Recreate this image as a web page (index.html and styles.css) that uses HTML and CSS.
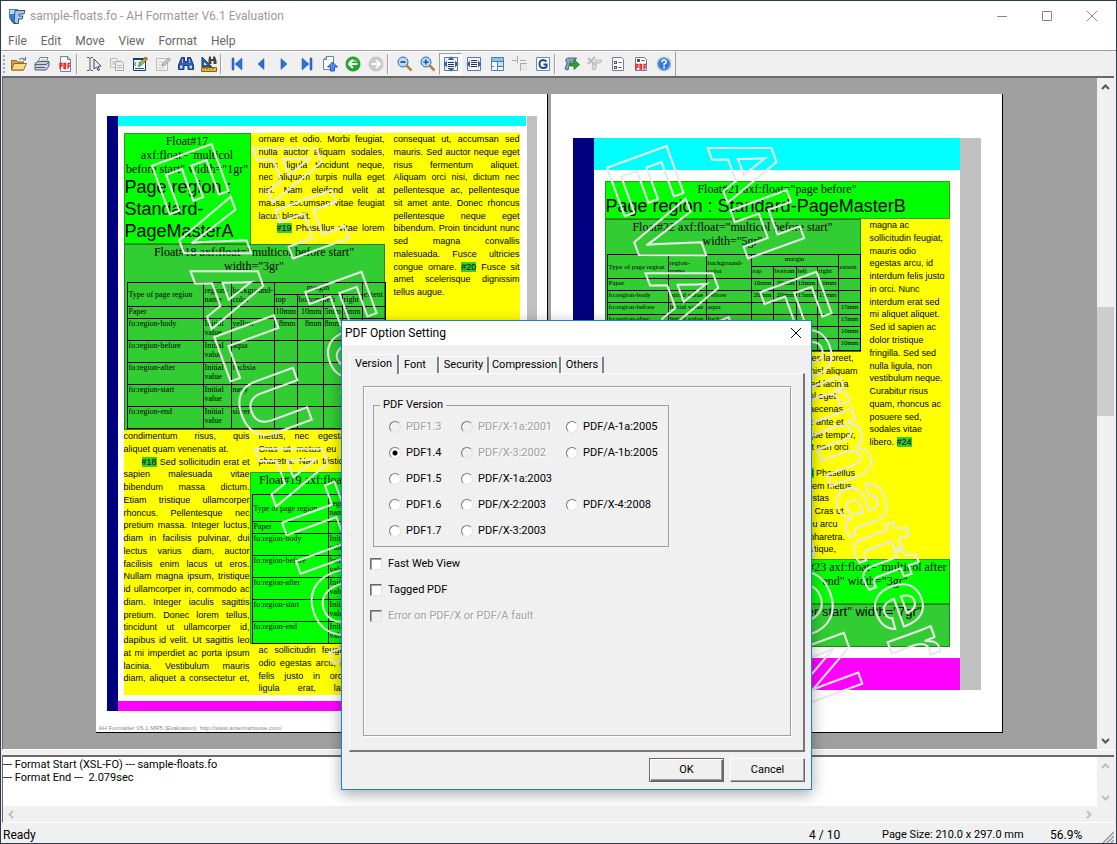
FILE: index.html
```html
<!DOCTYPE html>
<html lang="en">
<head>
<meta charset="utf-8">
<title>sample-floats.fo - AH Formatter V6.1 Evaluation</title>
<link rel="stylesheet" href="styles.css">
</head>
<body>
<div class="window">
  <header class="titlebar">
    <svg class="app-icon" width="18" height="18" viewBox="0 0 18 18"><path d="M1 2h9l-1 13H4L1 11z" fill="#3f7fd0"/><path d="M2 3h6v4H2z" fill="#b9d8f5"/><path d="M7 3.500h10l-1 3.500h-5v2h4l-1 3h-3.500v4.500H6z" fill="#a9c8ea" stroke="#35567f"/><path d="M3 12l2 4h3" fill="none" stroke="#23446f"/></svg>
    <h1 class="title">sample-floats.fo - AH Formatter V6.1 Evaluation</h1>
    <button class="sys" aria-label="Minimize"><svg width="12" height="12"><path d="M1 6.500h10" stroke="#888"/></svg></button>
    <button class="sys" aria-label="Maximize"><svg width="12" height="12"><path d="M1.500 1.500h9v9h-9z" stroke="#888" fill="none"/></svg></button>
    <button class="sys" aria-label="Close"><svg width="12" height="12"><path d="M1 1l10 10M11 1L1 11" stroke="#888"/></svg></button>
  </header>
  <nav class="menu">
    <button>File</button><button>Edit</button><button>Move</button><button>View</button><button>Format</button><button>Help</button>
  </nav>
  <div class="toolbar">
    <span class="grip"></span>
    <button aria-label="Open"><svg viewBox="0 0 16 16"><path d="M0.500 4.500h5l1 1.500h6v8h-12z" fill="#d9a440" stroke="#96681a"/><path d="M3 7.500h12.500L12.500 14H.5z" fill="#fbd985" stroke="#96681a"/><path d="M8 3.500q3-3 6 0M14.500 1v3h-3" fill="none" stroke="#4c6f96"/></svg></button>
    <button aria-label="Print"><svg viewBox="0 0 16 16"><path d="M6 1.500h8L11.500 7H3.500z" fill="#fff" stroke="#6a7f9c"/><path d="M1 7.500l3-2h11V10l-3 4H1z" fill="#c7d0dd" stroke="#4d6079"/><path d="M1 8.500h11l3-2.500M2 11.500h9" fill="none" stroke="#4d6079"/><path d="M7 4h4" stroke="#9ab"/></svg></button>
    <button aria-label="PDF output"><svg viewBox="0 0 16 16"><path d="M3.500.5h7l3 3v12h-10z" fill="#fff" stroke="#6d7f99"/><path d="M10.500.5v3h3" fill="none" stroke="#6d7f99"/><path d="M3 13V7.500h2v2.500H3M7 7.500v5h1.500v-5zM11 13V7.500h2.500M11 10h2" fill="none" stroke="#e22" stroke-width="1.300"/></svg></button>
    <span class="sep"></span>
    <button aria-label="Select text"><svg viewBox="0 0 16 16"><path d="M1 1.500h2l1 1 1-1h2M4 2v12M1 14.500h2l1-1 1 1h2" fill="none" stroke="#555"/><path d="M8 3v10l2.500-2 1.500 3.500 1.500-.7L12 10.500l3-.3z" fill="#eef" stroke="#445"/></svg></button>
    <button aria-label="Copy" disabled><svg viewBox="0 0 16 16"><path d="M1.500 2.500h6l2 2v7h-8z" fill="#eee" stroke="#bbb"/><path d="M6.500 5.500h6l2 2v7h-8z" fill="#eee" stroke="#aaa"/><path d="M8 9.500h5M8 11.500h5M3 6h3M3 8h3" stroke="#bbb"/></svg></button>
    <button aria-label="Edit source"><svg viewBox="0 0 16 16"><path d="M1.500 2.500h12v12h-12z" fill="#eaf4ff" stroke="#1c3d73"/><path d="M1 3h13" stroke="#1c3d73" stroke-width="2"/><path d="M4 6L2.500 8 4 10M7 6l1.500 2L7 10" fill="none" stroke="#169"/><path d="M3 12.500h9" stroke="#169"/><path d="M6.500 10.500l1-3.500 6-6 2 2-6 6z" fill="#9ac23c" stroke="#4b4a1e" stroke-width=".7"/><path d="M13 1.500l2 2" stroke="#e0522d" stroke-width="2"/></svg></button>
    <button aria-label="Edit style" disabled><svg viewBox="0 0 16 16"><path d="M1.500 2.500h11v12h-11z" fill="#f2f2f2" stroke="#bbb"/><path d="M3 6h5M3 9h4M3 12h7" stroke="#ccc"/><path d="M7 10l1-3 6-5 1.500 1.500-6 6z" fill="#ccc" stroke="#999"/></svg></button>
    <button aria-label="Find"><svg viewBox="0 0 16 16"><path d="M3.500 1.500h3v4h3v-4h3l3 7.500v4.500h-5.500V9.500h-4v4H.5V9z" fill="#2f5fae" stroke="#173a77"/><path d="M2 9.500h2.500v3H2zM11.500 9.500H14v3h-2.500z" fill="#bcd4f5"/><path d="M4.500 3v4M11.500 3v4" stroke="#9dbdec"/></svg></button>
    <button aria-label="Measure"><svg viewBox="0 0 16 16"><path d="M1 1v10h10z" fill="#2a5cab" stroke="#173a77"/><path d="M3 6v3h3z" fill="#eee"/><path d="M.5 11.500h15v4H.5z" fill="#f0b92e" stroke="#8a6410"/><path d="M3 12v1.500M6 12v1.500M9 12v1.500M12 12v1.500" stroke="#654"/><path d="M8 .5h2v2.500h2V.5h2l1.500 4V8h-3V5h-2v3h-3V4z" fill="#444"/></svg></button>
    <span class="sep"></span>
    <button aria-label="First page"><svg viewBox="0 0 16 16"><path d="M2 2h2v12H2zM12 2v12L5 8z" fill="#2a72d8" stroke="#174ea0" stroke-width=".5"/></svg></button>
    <button aria-label="Previous page"><svg viewBox="0 0 16 16"><path d="M11 2.500v11L5 8z" fill="#2a72d8" stroke="#174ea0" stroke-width=".5"/></svg></button>
    <button aria-label="Next page"><svg viewBox="0 0 16 16"><path d="M5 2.500v11L11 8z" fill="#2a72d8" stroke="#174ea0" stroke-width=".5"/></svg></button>
    <button aria-label="Last page"><svg viewBox="0 0 16 16"><path d="M3 2v12l7-6zM11 2h2v12h-2z" fill="#2a72d8" stroke="#174ea0" stroke-width=".5"/></svg></button>
    <button aria-label="Go to page"><svg viewBox="0 0 16 16"><path d="M4.500.5h7v13h-10v-10z" fill="#fff" stroke="#6d7f99"/><path d="M4.500.5v3h-3" fill="none" stroke="#6d7f99"/><path d="M10.500 6l5 5h-3v4h-4v-4h-3z" fill="#4b8ce6" stroke="#2a5aa8"/></svg></button>
    <button aria-label="Back"><svg viewBox="0 0 16 16"><circle cx="8" cy="8" r="7.500" fill="#22a52b"/><path d="M3 6q5-6 10 0" fill="#7fd47c"/><path d="M12.500 8H4.500M8 4L4 8l4 4" stroke="#fff" stroke-width="2" fill="none"/></svg></button>
    <button aria-label="Forward" disabled><svg viewBox="0 0 16 16"><circle cx="8" cy="8" r="7.500" fill="#c9c9c9"/><path d="M3.500 8h8M8 4l4 4-4 4" stroke="#fff" stroke-width="2" fill="none"/></svg></button>
    <span class="sep"></span>
    <button aria-label="Zoom out"><svg viewBox="0 0 16 16"><path d="M9.500 9.500l5 5" stroke="#b8862d" stroke-width="2.500"/><circle cx="6" cy="6" r="5" fill="#b5dbf8" stroke="#356aad"/><path d="M3.500 6h5" stroke="#235" stroke-width="1.500"/></svg></button>
    <button aria-label="Zoom in"><svg viewBox="0 0 16 16"><path d="M9.500 9.500l5 5" stroke="#b8862d" stroke-width="2.500"/><circle cx="6" cy="6" r="5" fill="#b5dbf8" stroke="#356aad"/><path d="M3.500 6h5M6 3.500v5" stroke="#15b" stroke-width="1.500"/></svg></button>
    <button class="pressed" aria-label="Fit page" aria-pressed="true"><svg viewBox="0 0 16 16"><path d="M1.500 1.500h13v13h-13z" fill="#f4f8ff" stroke="#5c78a5"/><path d="M8 .5l3.500 3.500h-7zM8 15.500l3.500-3.500h-7zM.5 8L4 4.500v7zM15.500 8L12 4.500v7z" fill="#2a66c8"/><path d="M5 6.500h6M5 8.500h6M5 10.500h6" stroke="#333"/></svg></button>
    <button aria-label="Fit width"><svg viewBox="0 0 16 16"><path d="M1.500 1.500h13v13h-13z" fill="#f4f8ff" stroke="#5c78a5"/><path d="M.5 8L4 4.500v7zM15.500 8L12 4.500v7z" fill="#2a66c8"/><path d="M5 4.500h6M5 6.500h6M5 8.500h6M5 10.500h6" stroke="#333"/></svg></button>
    <button aria-label="Layout"><svg viewBox="0 0 16 16"><path d="M2.500 1.500h12v13h-12z" fill="#fff" stroke="#4482a8"/><path d="M3 2h11v3H3z" fill="#8ac4dc"/><path d="M3 5.500h11M8.500 5v9M8 10.500h6M3 10.500h2" stroke="#4482a8"/><path d="M9 6h5v4H9z" fill="#bfe0ee"/></svg></button>
    <button aria-label="Crop marks"><svg viewBox="0 0 16 16"><path d="M0 4.500h6M5.500 0v7M8 4.500h6M8 7.500h7M8.500 7v8" stroke="#aaa" fill="none"/><path d="M9 8h6v7H9z" fill="#e8e8e8"/></svg></button>
    <button aria-label="Grid"><svg viewBox="0 0 16 16"><path d="M1.500 1.500h13v13h-13z" fill="#fff" stroke="#5c90c4"/><path d="M11.500 5.500Q10 4 8 4 4.500 4.200 4.500 8T8 12q2.500 0 3.500-1V8.500H8.500" fill="none" stroke="#184a94" stroke-width="2"/></svg></button>
    <span class="sep"></span>
    <button aria-label="Run format"><svg viewBox="0 0 16 16"><path d="M1.500 4l2-2h9L10 6H6v3H5l-1 5-3-1 2-6z" fill="#8da6c6" stroke="#4b6180"/><path d="M6 7.500h4V3.500l5.500 5-5.500 5V10H6z" fill="#27a42c" stroke="#0f6b18" stroke-width=".7"/></svg></button>
    <button aria-label="Stop format" disabled><svg viewBox="0 0 16 16"><path d="M6 7h4l-2 7-3-1zM8 4h7l-2 3H9z" fill="#ddd" stroke="#bbb"/><path d="M1 2l7 7M8 1L1 8" stroke="#bbb" stroke-width="2"/></svg></button>
    <button aria-label="Format options"><svg viewBox="0 0 16 16"><path d="M2.500 1.500h9l2 2v11h-11z" fill="#fff" stroke="#6d7f99"/><path d="M4 5h3v3H4zM4 10h3v3H4z" fill="#555"/><path d="M8.500 6.500h3M8.500 11.500h3" stroke="#555"/><path d="M5 6h1v1H5zM5 11h1v1H5z" fill="#fff"/></svg></button>
    <button aria-label="PDF options"><svg viewBox="0 0 16 16"><path d="M2.500 1.500h9l2 2v11h-11z" fill="#fff" stroke="#6d7f99"/><path d="M4 3h3v3H4z" fill="#555"/><path d="M8.500 4.500h3" stroke="#555"/><path d="M3 14V8.500h2V11H3M7 8.500V13h1.500V8.500zM11 14V8.500h2.500M11 11h2" fill="none" stroke="#e22" stroke-width="1.300"/></svg></button>
    <button aria-label="Help"><svg viewBox="0 0 16 16"><circle cx="8" cy="8" r="6.500" fill="#2f79dc" stroke="#9db6d6" stroke-width="1.500"/><path d="M5.800 6.200Q6 4 8 4t2.200 2Q10 7.500 8.100 8v1.500" fill="none" stroke="#fff" stroke-width="1.600"/><path d="M7.200 10.500h1.800v1.700H7.200z" fill="#fff"/></svg></button>
  </div>

  <main class="viewer">
    <div class="pages">
      <article class="page page-a">
        <div class="start"></div>
        <div class="middle">
          <div class="before"></div>
          <div class="body">
            <div class="upper">
              <div class="wide">
                <div class="first">
                  <section class="float bright f17">
                    <p class="cap">Float#17<br>axf:float="multicol<br>before start" width="1gr"</p>
                    <p class="big">Page region :<br>Standard-<br>PageMasterA</p>
                  </section>
                  <div class="lines l8"><span>ornare et odio. Morbi feugiat,</span><span>nulla auctor aliquam sodales,</span><span>nunc ligula tincidunt neque,</span><span>nec aliquam turpis nulla eget</span><span>nisl. Nam eleifend velit at</span><span>massa accumsan vitae feugiat</span><span class="end">lacus blandit.</span><span class="indent"><mark>#19</mark> Phasellus vitae lorem</span></div>
                </div>
                <section class="float lime f18">
                  <p class="cap">Float#18 axf:float="multicol before start"<br>width="3gr"</p>
                  <table class="t18">
                    <colgroup><col class="c76"><col class="c28"><col class="c43"><col class="c23"><col class="c26"><col class="c19"><col class="c20"><col class="c23"></colgroup>
                    <tr class="h"><td rowspan="2">Type of page region</td><td rowspan="2">region-<br>name</td><td rowspan="2">background-<br>color</td><td colspan="4" class="mid">margin</td><td rowspan="2">extent</td></tr>
                    <tr class="h"><td>top</td><td>bottom</td><td>left</td><td>right</td></tr>
                    <tr class="h"><td>Paper</td><td></td><td></td><td class="r">10mm</td><td class="r">10mm</td><td class="r">5mm</td><td class="r">5mm</td><td></td></tr>
                    <tr><td>fo:region-body</td><td>Initial value</td><td>yellow</td><td class="r">8mm</td><td class="r">8mm</td><td class="r">8mm</td><td class="r">8mm</td><td></td></tr>
                    <tr><td>fo:region-before</td><td>Initial value</td><td>aqua</td><td></td><td></td><td></td><td></td><td></td></tr>
                    <tr><td>fo:region-after</td><td>Initial value</td><td>fuchsia</td><td></td><td></td><td></td><td></td><td></td></tr>
                    <tr><td>fo:region-start</td><td>Initial value</td><td>navy</td><td></td><td></td><td></td><td></td><td></td></tr>
                    <tr><td>fo:region-end</td><td>Initial value</td><td>silver</td><td></td><td></td><td></td><td></td><td></td></tr>
                  </table>
                </section>
              </div>
              <div class="lines l13"><span>consequat ut, accumsan sed</span><span>mauris. Sed auctor neque eget</span><span>risus fermentum aliquet.</span><span>Aliquam orci nisi, dictum nec</span><span>pellentesque ac, pellentesque</span><span>sit amet ante. Donec rhoncus</span><span>pellentesque neque eget</span><span>bibendum. Proin tincidunt nunc</span><span>sed magna convallis</span><span>malesuada. Fusce ultricies</span><span>congue ornare. <mark>#20</mark> Fusce sit</span><span>amet scelerisque dignissim</span><span class="end">tellus augue.</span></div>
            </div>
            <div class="lower">
              <div class="lines l20"><span>condimentum risus, quis</span><span class="end">aliquet quam venenatis at.</span><span class="indent"><mark>#18</mark> Sed sollicitudin erat et</span><span>sapien malesuada vitae</span><span>bibendum massa dictum.</span><span>Etiam tristique ullamcorper</span><span>rhoncus. Pellentesque nec</span><span>pretium massa. Integer luctus,</span><span>diam in facilisis pulvinar, dui</span><span>lectus varius diam, auctor</span><span>facilisis enim lacus ut eros.</span><span>Nullam magna ipsum, tristique</span><span>id ullamcorper in, commodo ac</span><span>diam. Integer iaculis sagittis</span><span>pretium. Donec lorem tellus,</span><span>tincidunt ut ullamcorper id,</span><span>dapibus id velit. Ut sagittis leo</span><span>at mi imperdiet ac porta ipsum</span><span>lacinia. Vestibulum mauris</span><span>diam, aliquet a consectetur et,</span></div>
              <div class="rest">
                <div class="lines l3"><span>metus, nec egestas lectus.</span><span>Cras ut metus eu arcu nunc</span><span>pharetra. Nam tristique, sed a</span></div>
                <section class="float bright f19">
                  <p class="cap">Float#19 axf:float="multicol after end" width="3gr"</p>
                  <table class="t19">
                    <colgroup><col class="c76"><col class="c28"><col></colgroup>
                    <tr class="head"><td>Type of page region</td><td>region-<br>name</td><td></td></tr>
                    <tr class="h"><td>Paper</td><td></td><td></td></tr>
                    <tr><td>fo:region-body</td><td>Initial value</td><td></td></tr>
                    <tr><td>fo:region-before</td><td>Initial value</td><td></td></tr>
                    <tr><td>fo:region-after</td><td>Initial value</td><td></td></tr>
                    <tr><td>fo:region-start</td><td>Initial value</td><td></td></tr>
                    <tr><td>fo:region-end</td><td>Initial value</td><td></td></tr>
                  </table>
                </section>
                <div class="lines l4"><span>ac sollicitudin feugiat, mauris</span><span>odio egestas arcu, interdum a</span><span>felis justo in orci. Nullam</span><span>ligula erat, laoreet a</span></div>
              </div>
            </div>
          </div>
          <div class="after"></div>
        </div>
        <div class="edge"></div>
        <p class="credit">AH Formatter V6.1 MR5 (Evaluation) &nbsp;http://www.antennahouse.com/</p>
        <svg class="mark" width="100%" height="100%"><text class="m-eval" transform="translate(54 66) rotate(70)">EVALUATION</text><text class="m-name" transform="translate(156 52) rotate(70)">AH Formatter</text></svg>
      </article>

      <article class="page page-b">
        <div class="start"></div>
        <div class="middle">
          <div class="before"></div>
          <div class="body">
            <section class="float bright f21">
              <p class="cap">Float#21 axf:float="page before"</p>
              <p class="big">Page region : Standard-PageMasterB</p>
            </section>
            <div class="split">
              <div class="left5">
                <section class="float lime f22">
                  <p class="cap">Float#22 axf:float="multicol before start"<br>width="5gr"</p>
                  <table class="t22">
                    <colgroup><col class="c61"><col class="c38"><col class="c45"><col class="c22"><col class="c23"><col class="c21"><col class="c21"><col class="c22"></colgroup>
                    <tr><td rowspan="2">Type of page region</td><td rowspan="2">region-<br>name</td><td rowspan="2">background-<br>color</td><td colspan="4" class="mid">margin</td><td rowspan="2">extent</td></tr>
                    <tr><td>top</td><td>bottom</td><td>left</td><td>right</td></tr>
                    <tr><td>Paper</td><td></td><td></td><td class="r">10mm</td><td class="r">20mm</td><td class="r">10mm</td><td class="r">10mm</td><td></td></tr>
                    <tr><td>fo:region-body</td><td>Initial value</td><td>yellow</td><td class="r">20mm</td><td class="r">20mm</td><td class="r">15mm</td><td class="r">15mm</td><td></td></tr>
                    <tr><td>fo:region-before</td><td>Initial value</td><td>aqua</td><td></td><td></td><td></td><td></td><td class="r">15mm</td></tr>
                    <tr><td>fo:region-after</td><td>Initial value</td><td>fuchsia</td><td></td><td></td><td></td><td></td><td class="r">15mm</td></tr>
                    <tr><td>fo:region-start</td><td>Initial value</td><td>navy</td><td></td><td></td><td></td><td></td><td class="r">10mm</td></tr>
                    <tr><td>fo:region-end</td><td>Initial value</td><td>silver</td><td></td><td></td><td></td><td></td><td class="r">10mm</td></tr>
                  </table>
                </section>
                <div class="lines ragged l16"><span>at ultricies laoreet,</span><span>mauris nisl aliquam</span><span>risus. Sed lacinia</span><span>nunc nisl eget</span><span>velit. Maecenas</span><span>vel vitae ante et</span><span>non neque tempor,</span><span>tincidunt non orci</span><span>&nbsp;</span><span class="indent"><mark>#23</mark> Phasellus</span><span>vitae lorem metus,</span><span>nec egestas</span><span>lobortis. Cras ut</span><span>metus eu arcu</span><span>rutrum pharetra.</span><span>Nam tristique,</span></div>
              </div>
              <div class="lines ragged l18"><span>magna ac</span><span>sollicitudin feugiat,</span><span>mauris odio</span><span>egestas arcu, id</span><span>interdum felis justo</span><span>in orci. Nunc</span><span>interdum erat sed</span><span>mi aliquet aliquet.</span><span>Sed id sapien ac</span><span>dolor tristique</span><span>fringilla. Sed sed</span><span>nulla ligula, non</span><span>vestibulum neque.</span><span>Curabitur risus</span><span>quam, rhoncus ac</span><span>posuere sed,</span><span>sodales vitae</span><span>libero. <mark>#24</mark></span></div>
            </div>
            <section class="float bright f23"><p class="cap">Float#23 axf:float="multicol after end" width="3gr"</p></section>
            <section class="float lime f24"><p>Float#24 axf:float="multicol after start" width="7gr"</p></section>
          </div>
          <div class="after"></div>
        </div>
        <div class="edge"></div>
        <svg class="mark" width="100%" height="100%"><text class="m-eval" transform="translate(54 68) rotate(70)">EVALUATION</text><text class="m-name" transform="translate(156 52) rotate(70)">AH Formatter</text></svg>
      </article>
    </div>
    <div class="vscroll">
      <button aria-label="Scroll up"><svg width="9" height="6"><path d="M1 5l3.500-3.500L8 5" fill="none" stroke="#555" stroke-width="2"/></svg></button>
      <div class="track"><div class="thumb"></div></div>
      <button aria-label="Scroll down"><svg width="9" height="6"><path d="M1 1l3.500 3.500L8 1" fill="none" stroke="#555" stroke-width="2"/></svg></button>
    </div>
  </main>

  <section class="log">
    <div class="log-row">
      <pre>--- Format Start (XSL-FO) --- sample-floats.fo
--- Format End ---  2.079sec</pre>
      <div class="vscroll">
        <button disabled aria-label="Scroll log up"><svg width="9" height="6"><path d="M1 5l3.500-3.500L8 5" fill="none" stroke="#bfbfbf" stroke-width="2"/></svg></button>
        <div class="track"></div>
        <button disabled aria-label="Scroll log down"><svg width="9" height="6"><path d="M1 1l3.500 3.500L8 1" fill="none" stroke="#bfbfbf" stroke-width="2"/></svg></button>
      </div>
    </div>
    <div class="hscroll">
      <button disabled aria-label="Scroll log left"><svg width="6" height="9"><path d="M5 1L1.500 4.500 5 8" fill="none" stroke="#bfbfbf" stroke-width="2"/></svg></button>
      <button disabled aria-label="Scroll log right"><svg width="6" height="9"><path d="M1 1l3.500 3.500L1 8" fill="none" stroke="#bfbfbf" stroke-width="2"/></svg></button>
    </div>
  </section>

  <footer class="status">
    <span class="ready">Ready</span><span class="s-page">4 / 10</span><span class="s-size">Page Size: 210.0 x 297.0 mm</span><span class="s-zoom">56.9%</span>
    <svg class="resize" width="12" height="12"><path d="M1 12L12 1M5 12l7-7M9 12l3-3" stroke="#999" stroke-width="1.500"/></svg>
  </footer>

  <form class="dialog" role="dialog" aria-labelledby="dlg-title">
    <div class="dlg-head">
      <h2 id="dlg-title">PDF Option Setting</h2>
      <button type="button" aria-label="Close dialog"><svg width="12" height="12"><path d="M1 1l10 10M11 1L1 11" stroke="#000"/></svg></button>
    </div>
    <div class="dlg-body">
      <div class="tabs" role="tablist">
        <button type="button" role="tab" aria-selected="true" class="tab on w50">Version</button><button type="button" role="tab" class="tab w40">Font</button><button type="button" role="tab" class="tab w50">Security</button><button type="button" role="tab" class="tab w72">Compression</button><button type="button" role="tab" class="tab w43">Others</button>
      </div>
      <div class="panel">
        <div class="well">
          <fieldset>
            <legend>PDF Version</legend>
            <div class="radios">
              <label class="off"><input type="radio" name="v" disabled>PDF1.3</label><label class="off"><input type="radio" name="v" disabled>PDF/X-1a:2001</label><label><input type="radio" name="v">PDF/A-1a:2005</label>
              <label><input type="radio" name="v" checked>PDF1.4</label><label class="off"><input type="radio" name="v" disabled>PDF/X-3:2002</label><label><input type="radio" name="v">PDF/A-1b:2005</label>
              <label><input type="radio" name="v">PDF1.5</label><label class="two"><input type="radio" name="v">PDF/X-1a:2003</label>
              <label><input type="radio" name="v">PDF1.6</label><label><input type="radio" name="v">PDF/X-2:2003</label><label><input type="radio" name="v">PDF/X-4:2008</label>
              <label><input type="radio" name="v">PDF1.7</label><label class="two"><input type="radio" name="v">PDF/X-3:2003</label>
            </div>
          </fieldset>
          <div class="checks">
            <label><input type="checkbox">Fast Web View</label>
            <label><input type="checkbox">Tagged PDF</label>
            <label class="off"><input type="checkbox" disabled>Error on PDF/X or PDF/A fault</label>
          </div>
        </div>
      </div>
      <div class="actions"><button type="submit" class="btn default">OK</button><button type="button" class="btn">Cancel</button></div>
    </div>
  </form>
</div>
</body>
</html>
```
FILE: styles.css
```css
* { box-sizing: border-box; }
body { margin: 0; font: 12px/14px Roboto, "Liberation Sans", sans-serif; color: #000; }
h1, h2, p, pre { margin: 0; font: inherit; }
button { font: inherit; border: 0; padding: 0; margin: 0; background: none; color: inherit; }
svg { display: block; }

.window { position: relative; display: flex; flex-direction: column; height: 100vh; min-height: 844px; overflow: hidden; background: #f0f0f0; border: 1px solid #2b3a50; }

.titlebar { display: flex; align-items: center; flex: none; height: 29px; background: #fff; color: #999; padding: 0 2px 0 7px; }
.app-icon { margin-right: 4px; }
.title { flex: 1; }
.sys { width: 45px; height: 29px; display: grid; place-items: center; }
.menu { display: flex; flex: none; height: 21px; padding-top: 2px; background: #fff; color: #666; border-bottom: 1px solid #a0a0a0; }
.menu button { padding: 0 7px; }

.toolbar { display: flex; align-items: center; flex: none; align-self: flex-start; height: 25px; border-top: 1px solid #fff; border-right: 1px solid #a0a0a0; }
.toolbar button { width: 23px; height: 22px; display: grid; place-items: center; }
.toolbar svg { width: 16px; height: 16px; }
.grip { width: 6px; height: 18px; border-left: 2px dotted #a8a8a8; margin-left: 2px; margin-right: -2px; }
.sep { width: 6px; height: 20px; border-left: 1px solid #a0a0a0; border-right: 4px solid transparent; background: #fff; background-clip: padding-box; }
.toolbar .pressed { background: #f8f8f8; border: 1px solid #a0a0a0; border-right-color: #fff; border-bottom-color: #fff; }

.viewer { flex: 1; min-height: 0; display: flex; margin: 0 2px 0 1px; background: #a0a0a0; border-top: 2px solid #696969; border-left: 1px solid #696969; border-bottom: 1px solid #fff; overflow: hidden; }
.pages { flex: 1; display: flex; justify-content: center; align-items: flex-start; gap: 3px; padding: 16px 2px 0 0; overflow: hidden; }
.vscroll { flex: none; width: 17px; display: flex; flex-direction: column; background: #f0f0f0; }
.vscroll button { height: 17px; display: grid; place-items: center; }
.track { flex: 1; display: flex; flex-direction: column; }
.thumb { height: 109px; margin-top: 212px; background: #cdcdcd; }

.page { position: relative; flex: none; display: flex; width: 452px; height: 639px; background: #fff; border-right: 1px solid #000; border-bottom: 1px solid #000; font-family: "Liberation Sans", sans-serif; }
.start { background: #000080; }
.edge { background: #c0c0c0; }
.before { background: #0ff; }
.after { background: #f0f; }
.middle { flex: 1; display: flex; flex-direction: column; }
.body { flex: 1; background: #ff0; display: flex; flex-direction: column; }
.mark { position: absolute; inset: 0; }
.mark text { font-family: "Liberation Sans", sans-serif; font-weight: bold; fill: none; stroke: #e8e8e8; stroke-width: 2px; }
.m-eval { font-size: 92px; }
.m-name { font-size: 87px; }

.page-a { padding: 22px 10px 21px 11px; }
.page-a .start { width: 11px; }
.page-a .edge { width: 10px; margin-left: 1px; }
.page-a .before { height: 10px; }
.page-a .after { height: 10px; }
.page-a .body { margin: 7px 6px 6px; }
.upper { display: flex; gap: 9px; height: 297px; }
.wide { width: 261px; display: flex; flex-direction: column; }
.first { display: flex; gap: 8px; height: 111px; }
.lower { display: flex; height: 265px; }
.rest { flex: 1; display: flex; flex-direction: column; }
.credit { position: absolute; left: 3px; bottom: 0; font-size: 6px; line-height: 7px; color: #888; white-space: nowrap; }

.lines { width: 126px; display: grid; grid-auto-rows: 1fr; font-size: 9px; line-height: 12px; white-space: nowrap; flex: none; text-align: justify; text-align-last: justify; }
.lines .end, .ragged { text-align: left; text-align-last: left; }
.indent { padding-left: 18px; }
.lines mark { background: #32cd32; color: inherit; }
.l3 { height: 38px; margin: 0 0 4px 9px; }
.l4 { height: 51px; margin-left: 9px; }
.l8 { height: 102px; }
.l13 { height: 166px; }
.l16 { height: 204px; }
.l18 { height: 230px; }
.l20 { height: 255px; }

.float { font: 12px/14px "Liberation Serif", serif; text-align: center; flex: none; }
.bright { background: #0f0; border: 1px solid #2f9c12; }
.lime { background: #32cd32; border: 1px solid #23801f; }
.cap { font: 12px/14px "Liberation Serif", serif; }
.big { font: 18px/22px "Liberation Sans", sans-serif; text-align: left; white-space: nowrap; }
.f17 { width: 127px; height: 111px; }
.f18 { height: 186px; display: flex; flex-direction: column; justify-content: space-between; }
.f19 { height: 172px; width: 270px; white-space: nowrap; }
.float table { border-collapse: collapse; table-layout: fixed; text-align: left; }
.float td { border: 1px solid #000; padding: 0 1px; vertical-align: top; overflow: hidden; }
.float .r { text-align: right; }
.float .mid { text-align: center; }
.float td[rowspan], .head td { vertical-align: middle; }
.t18, .t19 { font-size: 8px; line-height: 9px; margin-left: 2px; }
.t18 { width: 258px; }
.t19 { width: 266px; margin-left: 1px; white-space: normal; margin-top: 7px; }
.t18 tr, .t19 tr { height: 22px; }
.t18 .h, .t19 .h { height: 12px; }
.t19 .head { height: 27px; }
.c76 { width: 76px; } .c28 { width: 28px; } .c43 { width: 43px; } .c26 { width: 26px; } .c23 { width: 23px; } .c20 { width: 20px; } .c19 { width: 19px; }
.c61 { width: 61px; } .c38 { width: 38px; } .c45 { width: 45px; } .c22 { width: 22px; } .c21 { width: 21px; }

.page-b { padding: 44px 21px 42px 22px; }
.page-b .start, .page-b .edge { width: 21px; }
.page-b .before, .page-b .after { height: 32px; }
.page-b .body { margin: 11px 10px 11px 11px; }
.f21 { height: 38px; }
.f21 .big { line-height: 21px; }
.split { display: flex; gap: 9px; flex: 1; }
.left5 { width: 256px; display: flex; flex-direction: column; }
.left5 .lines { width: 80px; margin-left: 176px; }
.split > .lines { width: 80px; }
.f22 { height: 133px; display: flex; flex-direction: column; justify-content: space-between; }
.t22 { font-size: 7px; line-height: 8px; margin-left: 1px; width: 253px; }
.t22 tr { height: 12px; }
.f23 { width: 169px; height: 45px; align-self: flex-end; }
.f24 { height: 43px; font: 13px/14px "Liberation Sans", sans-serif; }

.log { flex: none; margin: 5px 2px 0 1px; border-top: 2px solid #696969; border-left: 1px solid #696969; background: #f0f0f0; border-bottom: 1px solid #fff; }
.log-row { display: flex; height: 49px; background: #fff; }
.log pre { flex: 1; padding-top: 1px; font: 11px/13px Roboto, "Liberation Sans", sans-serif; }
.hscroll { display: flex; justify-content: space-between; height: 16px; padding: 0 22px 0 5px; }
.status { flex: none; display: flex; align-items: center; height: 20px; padding: 3px 2px 0; }
.ready { flex: 1; }
.s-page { width: 73px; } .s-size { width: 168px; font-size: 11px; } .s-zoom { width: 52px; }
.resize { align-self: flex-end; }

.dialog { position: absolute; left: 340px; top: 319px; width: 471px; background: #f0f0f0; border: 1px solid #1c7fd0; box-shadow: 0 4px 14px rgba(0, 0, 0, .35); font-size: 11px; }
.dlg-head { display: flex; align-items: center; justify-content: space-between; height: 24px; background: #fff; padding: 0 9px 0 3px; font-size: 12px; }
.dlg-body { padding: 8px 6px 7px 7px; }
.tabs { display: flex; align-items: flex-end; height: 20px; }
.tab { height: 17px; border-top: 1px solid #fff; border-left: 1px solid #fff; border-right: 2px solid #808080; border-radius: 2px 2px 0 0; text-align: center; }
.tab.on { height: 20px; margin-bottom: -1px; background: #f0f0f0; padding-bottom: 2px; }
.w50 { width: 50px; } .w40 { width: 40px; text-align: left; padding-left: 4px; } .w72 { width: 72px; } .w43 { width: 43px; }
.panel { border: 1px solid #fff; border-right: 2px solid #777; border-bottom: 2px solid #777; padding: 12px 12px 14px 13px; }
.well { height: 350px; border: 1px solid #a0a0a0; box-shadow: 1px 1px 0 #fff, inset 1px 1px 0 #fff; padding: 11px 6px; }
fieldset { margin: 0 0 0 3px; width: 296px; height: 149px; border: 1px solid #a0a0a0; padding: 2px 0 0 15px; }
legend { padding: 0 3px; margin-left: -9px; }
.radios { display: grid; grid-template-columns: 72px 105px 100px; grid-auto-rows: 26px; align-items: center; }
.two { grid-column: 2 / 4; }
label { display: flex; align-items: center; white-space: nowrap; }
.off { color: #a0a0a0; text-shadow: 1px 1px 0 #fff; }
input { appearance: none; margin: 0; flex: none; background: #fff; }
input[type=radio] { width: 12px; height: 12px; margin-right: 5px; border-radius: 50%; border: 1px solid; border-color: #777 #e3e3e3 #e3e3e3 #777; }
input[type=radio]:checked { background: radial-gradient(circle, #000 2px, #fff 3px); }
input[type=checkbox] { width: 12px; height: 12px; margin-right: 6px; border: 1px solid; border-color: #696969 #e3e3e3 #e3e3e3 #696969; box-shadow: inset 1px 1px 0 #a0a0a0; }
input:disabled { background: #f0f0f0; }
.checks { display: grid; grid-auto-rows: 26px; margin-top: 4px; }
.actions { display: flex; justify-content: flex-end; gap: 6px; margin-top: 6px; }
.btn { width: 75px; height: 24px; border: 1px solid; border-color: #fff #696969 #696969 #fff; box-shadow: inset -1px -1px 0 #a0a0a0; }
.btn.default { border-color: #696969; box-shadow: inset 1px 1px 0 #fff, inset -1px -1px 0 #696969, inset -2px -2px 0 #a0a0a0; }
```
